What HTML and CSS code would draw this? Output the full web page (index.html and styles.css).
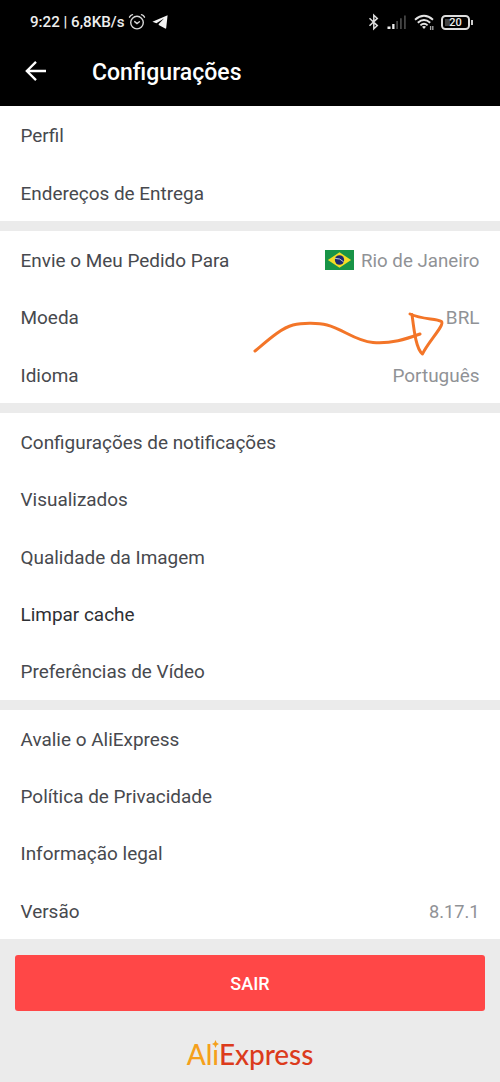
FILE: index.html
```html
<!DOCTYPE html>
<html lang="pt-BR">
<head>
<meta charset="utf-8">
<title>Configurações</title>
<link rel="stylesheet" href="styles.css">
</head>
<body>
<div class="screen">
  <header class="header">
    <div class="status">
      <span class="status-text">9:22 | 6,8KB/s</span>
      <svg class="ic-alarm" width="18" height="18" viewBox="0 0 18 18" fill="none" stroke="#d8d8d8" stroke-width="1.4" stroke-linecap="round"><circle cx="9" cy="9.6" r="6.3"/><path d="M1.500 4.200Q2.500 2.300 4.500 1.700M16.500 4.200Q15.500 2.300 13.500 1.700M6.700 8.600 9 10.600 11.400 8.700"/></svg>
      <svg class="ic-plane" width="16" height="14" viewBox="0 0 16 14" fill="#f4f4f4"><path d="M15.600.2.4 6.700l4 1.600L12 3.400 6.700 9.100v1l6.500 3.500c.6.2.9 0 1-.6z"/></svg>
      <div class="status-right">
        <svg width="12" height="18" viewBox="0 0 12 18" fill="none" stroke="#ddd" stroke-width="1.500"><path d="M1.500 5.200 9.300 12.600 5.800 15.800V2.200L9.300 5.400 1.500 12.800"/></svg>
        <svg class="ic-signal" width="20" height="14" viewBox="0 0 20 14"><g fill="#eee"><path d="M.5 11.500h3V14h-3z"/><path d="M5.200 9h2.300v5H5.200z"/></g><g fill="#444"><path d="M9.200 6h1.800v8H9.200zM13 3.300h1.800V14H13zM17 .6h1.800V14H17z"/></g></svg>
        <svg class="ic-wifi" width="21" height="17" viewBox="0 0 21 17" fill="none" stroke="#e4e4e4" stroke-width="1.900"><path d="M1 5.700Q10 -2 19 5.700M3.800 8.700Q10 3.200 16.200 8.700M6.400 11.400Q10 8.300 13.600 11.400"/><path fill="#e4e4e4" stroke="none" d="M8 12.800q2-1.400 4 0L10 15z"/><path d="M16.600 16v-4M18.800 12v4" stroke="#aaa" stroke-width="1.300"/></svg>
        <div class="battery"><span class="battery-level"></span><span class="battery-num">20</span></div><i class="battery-tip"></i>
      </div>
    </div>
    <div class="titlebar">
      <svg width="22" height="20" viewBox="0 0 22 20" fill="none" stroke="#fff" stroke-width="2.300"><path d="M21 10H2M11 .9 1.800 10l9.200 9.100"/></svg>
      <h1>Configurações</h1>
    </div>
  </header>
  <main>
    <section class="group">
      <div class="row">Perfil</div>
      <div class="row">Endereços de Entrega</div>
    </section>
    <section class="group">
      <div class="row">Envie o Meu Pedido Para
        <span class="value place"><svg class="flag" width="29" height="20" viewBox="0 0 30 20" preserveAspectRatio="none"><path fill="#189447" d="M0 0h30v20H0z"/><path fill="#f4dc25" d="M15 2.300 27 10 15 17.700 3 10z"/><circle cx="15" cy="10" r="4.800" fill="#20286f"/><path d="M10.500 8.400q5-.5 8.800 3.500" fill="none" stroke="#c3cad8" stroke-width="1"/></svg>Rio de Janeiro</span>
      </div>
      <div class="row">Moeda <span class="value">BRL</span></div>
      <div class="row">Idioma <span class="value">Português</span></div>
      <svg class="scribble" width="200" height="60" viewBox="250 300 200 60" fill="none" stroke="#f37528" stroke-width="3" stroke-linecap="round" stroke-linejoin="round"><path d="M255 351C267 341 281 328 293 325C303 322.500 319 323 327 325C343 329 355 341 373 342.500C391 344 406 339 420 334"/><path d="M410 314C423 320 436 318 441.500 321.500C445 325 428 342 422.500 354C416 349 414 330 412 314.500"/></svg>
    </section>
    <section class="group">
      <div class="row">Configurações de notificações</div>
      <div class="row">Visualizados</div>
      <div class="row">Qualidade da Imagem</div>
      <div class="row strong">Limpar cache</div>
      <div class="row">Preferências de Vídeo</div>
    </section>
    <section class="group">
      <div class="row">Avalie o AliExpress</div>
      <div class="row">Política de Privacidade</div>
      <div class="row">Informação legal</div>
      <div class="row">Versão <span class="value version">8.17.1</span></div>
    </section>
  </main>
  <footer class="footer">
    <button class="exit">SAIR</button>
    <div class="logo"><span class="ali">Alı<svg class="spark" width="7" height="8" viewBox="0 0 6 6" preserveAspectRatio="none"><path fill="#f5a01c" d="M3 0 4 2 6 3 4 4 3 6 2 4 0 3 2 2z"/></svg></span><span class="express">Express</span></div>
  </footer>
</div>
</body>
</html>
```
FILE: styles.css
```css
body { margin: 0; background: #ebebeb; font-family: Roboto, "Liberation Sans", sans-serif; }
.screen { width: 500px; height: 1082px; overflow: hidden; background: #ebebeb; }
.header { box-sizing: border-box; height: 106.400px; background: #000; color: #fff; }
.status { display: flex; align-items: center; height: 44px; padding: 0 27px 0 30px; }
.status-text { font-size: 15.150px; font-weight: 500; color: #eee; white-space: nowrap; }
.ic-alarm { margin-left: 3px; }
.ic-plane { margin-left: 6px; }
.status-right { display: flex; align-items: center; margin-left: auto; }
.ic-signal { margin-left: 7px; }
.ic-wifi { margin-left: 7px; }
.battery { position: relative; box-sizing: border-box; width: 29px; height: 15px; margin-left: 6px; border: 2px solid #ddd; border-radius: 4.500px; display: flex; align-items: center; justify-content: center; }
.battery-level { position: absolute; left: 1.500px; top: 2px; width: 5px; height: 7px; background: #444; }
.battery-num { position: relative; font-size: 11px; line-height: 11px; padding-top: 1px; font-weight: 500; color: #eee; }
.battery-tip { width: 2px; height: 5px; margin-left: 1px; background: #ccc; }
.titlebar { display: flex; align-items: center; height: 54px; padding-left: 25px; }
.titlebar h1 { margin: 0 0 0 45px; padding-top: 3px; font-size: 23px; line-height: 30px; font-weight: 500; }
.group { position: relative; background: #fff; margin-bottom: 10px; }
.group:last-child { margin-bottom: 0; }
.row { display: flex; align-items: center; justify-content: space-between; box-sizing: border-box; height: 57.350px; padding: 1.500px 20.500px 0; font-size: 18.950px; color: #47494e; white-space: nowrap; }
.strong { color: #2e3034; }
.value { display: flex; align-items: center; color: #909296; }
.place { font-size: 18.700px; }
.version { font-size: 18.200px; }
.flag { margin-right: 7px; margin-top: -2px; }
.scribble { position: absolute; left: 250px; top: 69px; }
.footer { padding: 15.500px 15px 0; }
.exit { display: block; width: 100%; height: 56px; padding: 1px 0 0; border: 0; border-radius: 3px; background: #ff4747; color: #fff; font: 500 18px Roboto, sans-serif; }
.logo { display: flex; justify-content: center; margin-top: 26px; font: 500 28px/34px Lato, sans-serif; letter-spacing: -0.100px; }
.ali { position: relative; color: #f5a01c; }
.spark { position: absolute; right: 0; top: 3px; }
.express { color: #dc3b1c; }
```
